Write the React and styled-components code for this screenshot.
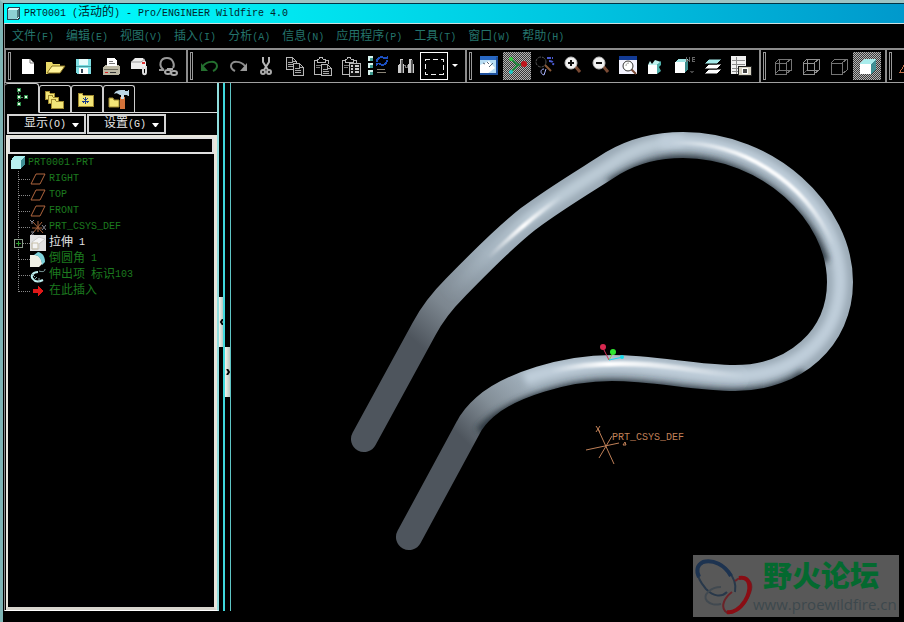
import React, { useState } from 'react';
import styled, { createGlobalStyle, css } from 'styled-components';

const GlobalStyle = createGlobalStyle`
  * { box-sizing: border-box; }
  body {
    margin: 0;
    background: #000;
    font-family: "Liberation Mono", "Noto Sans CJK SC", monospace;
    font-size: 12px;
    line-height: 16px;
    overflow: hidden;
  }
  button, input { font: inherit; color: inherit; }
`;

const Window = styled.div`
  position: relative;
  height: 100vh;
  display: flex;
  flex-direction: column;
  border-left: 3px solid #7fb5b5;
  border-top: 3px solid #9cc4c4;
  padding-left: 1px;
  background: #000;
`;

const TitleBar = styled.header`
  display: flex;
  align-items: center;
  gap: 4px;
  height: 21px;
  padding-left: 3px;
  border-top: 1px solid #034;
  border-bottom: 1px solid #cfe0e0;
  background: linear-gradient(90deg, #00ffff, #00e6f0 32%, #00c4e0 64%, #0099cc);
  color: #02252b;
  white-space: pre;
`;

const Title = styled.h1`
  margin: 0;
  font-size: 12px;
  font-weight: normal;
`;

const Ascii = styled.span`
  font-family: "Liberation Mono", monospace;
  font-size: 10px;
`;

const MenuBar = styled.nav`
  display: flex;
  align-items: center;
  gap: 12px;
  height: 24px;
  padding: 2px 0 0 7px;
  border-left: 1px solid #888;
`;

const MenuItem = styled.button`
  padding: 0;
  border: 0;
  background: none;
  color: #24746c;
  white-space: nowrap;
`;

const ToolBar = styled.div`
  display: flex;
  flex: none;
  height: 35px;
  overflow: hidden;
  border-top: 2px solid #8c8c8c;
  border-bottom: 1px solid #a0a0a0;
`;

const ToolGroup = styled.div`
  display: flex;
  flex: none;
  align-items: center;
  padding: 0 4px 0 2px;
  border-left: 2px solid #8c8c8c;
`;

const Grip = styled.span`
  width: 3px;
  height: 28px;
  margin-right: 3px;
  border: 1px solid #999;
`;

const ToolButton = styled.button`
  width: ${(props) => (props.$narrow ? '13px' : '28px')};
  height: 28px;
  padding: 0;
  border: 0;
  background: none;
  overflow: hidden;

  svg { display: block; }

  ${(props) => props.$outlined && css`
    border: 1px solid #fff;
    svg { margin: -1px; }
  `}
  ${(props) => props.$pressed && css`
    background: repeating-conic-gradient(#b4b4b4 0 25%, #383838 0 50%) 0 0 / 2px 2px;
  `}
`;

const Main = styled.main`
  flex: 1;
  min-height: 0;
  display: grid;
  grid-template-columns: 215px 6px 6px 1fr;
  margin-bottom: 11px;
`;

const Navigator = styled.section`
  display: flex;
  flex-direction: column;
  min-height: 0;
  border-left: 1px solid #888;
  border-bottom: 1px solid #fff;
  border-right: 2px solid #8fdede;
`;

const TabStrip = styled.div`
  display: flex;
  align-items: flex-end;
  height: 30px;

  &::after {
    content: "";
    flex: 1;
    border-bottom: 1px solid #ddd;
  }
`;

const Tab = styled.button`
  width: ${(props) => (props.$active ? '34px' : '32px')};
  height: ${(props) => (props.$active ? '30px' : '28px')};
  padding: 0 1px;
  border: 1px solid #ccc;
  border-bottom-color: ${(props) => (props.$active ? '#000' : '#ddd')};
  border-left-width: ${(props) => (props.$active ? '0' : '1px')};
  border-radius: 3px 3px 0 0;
  background: #000;
  svg { display: block; }
`;

const ActionRow = styled.div`
  display: flex;
  gap: 1px;
  padding: 1px 0 1px 2px;
`;

const DropButton = styled.button`
  display: flex;
  align-items: center;
  justify-content: flex-end;
  gap: 6px;
  width: 79px;
  height: 20px;
  padding: 1px 5px 0;
  border: 2px solid #d4d4d4;
  background: #000;
  color: #e6e6e6;
`;

const TreePanel = styled.div`
  flex: 1;
  min-height: 0;
  display: flex;
  flex-direction: column;
  margin-left: 1px;
  border: 2px solid #e8e6dc;
  border-right-width: 3px;
  border-bottom: 3px solid #d6d4cc;
`;

const FilterInput = styled.input`
  width: 100%;
  height: 17px;
  padding: 0 2px;
  border: 2px solid #e0e0e0;
  border-radius: 0;
  background: #000;
  color: #ddd;
  outline: none;
`;

const Tree = styled.ul`
  margin: 0;
  padding: 1px 0 0 3px;
  list-style: none;
  color: #1c7a1f;
`;

const TreeRow = styled.li`
  display: flex;
  align-items: center;
  height: 16px;
  color: ${(props) => (props.$selected ? '#e4e4e4' : 'inherit')};
  white-space: pre;

  svg { flex: none; margin-right: 3px; }
`;

const Branch = styled.span`
  flex: none;
  display: flex;
  align-items: center;
  width: 19px;
  height: 16px;
  padding-left: 3px;
  background:
    repeating-linear-gradient(90deg, #888 0 1px, #000 1px 2px) 8px 8px / 11px 1px no-repeat,
    repeating-linear-gradient(180deg, #888 0 1px, #000 1px 2px) 7px 0 / 1px ${(props) => (props.$last ? '9px' : '16px')} no-repeat;
`;

const Expander = styled.button`
  width: 9px;
  height: 9px;
  padding: 0;
  border: 1px solid #8a9a8a;
  background:
    linear-gradient(#2fa02f, #2fa02f) center / 5px 1px no-repeat,
    linear-gradient(#2fa02f, #2fa02f) center / 1px 5px no-repeat,
    #000;
`;

const Sash = styled.div`
  display: grid;
  grid-template-rows: 1fr 50px 50px 1fr;
  border-right: ${(props) => (props.$thin ? '1px solid #5fc4c4' : '2px solid #3fd8dc')};
`;

const SashHandle = styled.button`
  grid-row: ${(props) => props.$row};
  display: flex;
  align-items: center;
  justify-content: center;
  padding: 0;
  border: 0;
  background: linear-gradient(90deg, #f4f2ea, #b8c8c2);
`;

const Viewport = styled.section`
  min-width: 0;
  min-height: 0;
  svg { display: block; width: 100%; height: 100%; }
`;

const Watermark = styled.aside`
  position: absolute;
  right: 5px;
  bottom: 5px;
  display: flex;
  width: 206px;
  height: 62px;
  background: #585858;
`;

const MarkText = styled.div`
  display: flex;
  flex-direction: column;
  white-space: nowrap;
`;

const MarkName = styled.strong`
  padding-left: 10px;
  font-family: "Noto Sans CJK SC", sans-serif;
  font-size: 29px;
  font-weight: 900;
  line-height: 38px;
  color: #04692f;
`;

const MarkUrl = styled.a`
  font-family: "Open Sans", sans-serif;
  font-size: 15px;
  line-height: 22px;
  color: #3d484d;
  text-decoration: none;
`;

// Latin runs are set smaller so that two of them fill one Chinese character cell
const Label = ({ text }) =>
  text.split(/([\x20-\x7e]+)/).map((part, i) =>
    i % 2 ? <Ascii key={i}>{part}</Ascii> : part
  );

const Icon = ({ children, size = 28, box = 28, smooth }) => (
  <svg width={size} height={size} viewBox={`0 0 ${box} ${box}`} fill="none"
    shapeRendering={smooth ? 'auto' : 'crispEdges'} aria-hidden="true">
    {children}
  </svg>
);

const Page = ({ x, y, w = 11, h = 13 }) => (
  <g>
    <path d={`M${x} ${y}h${w - 4}l4 4v${h - 4}h-${w}z`} fill="#0a0a0a" stroke="#b8b8b8" />
    <path d={`M${x + w - 4} ${y}v4h4M${x + 2} ${y + 5}h${w - 5}M${x + 2} ${y + 7}h${w - 4}M${x + 2} ${y + 9}h${w - 4}`} stroke="#aaa" />
  </g>
);

const Clipboard = () => (
  <g stroke="#b8b8b8">
    <path d="M9 8H6v14h9M17 8h3v4M9 10V7h2l1-2h2l1 2h2v3z" />
    <path d="M8 13h6M8 15h4" stroke="#777" />
  </g>
);

const Loupe = ({ sign }) => (
  <g>
    <path d="M16 14l5 6" stroke="#7a4a34" strokeWidth="3" />
    <circle cx="12" cy="11" r="6" fill="#f2f2f2" stroke="#bbb" />
    <path d={sign === '+' ? 'M9 11h6M12 8v6' : 'M9 11h6'} stroke="#111" strokeWidth="2" />
  </g>
);

const Cube = ({ x = 7, y = 7 }) => (
  <g transform={`translate(${x} ${y})`}>
    <path d="M0 5h11v10H0z" fill="#fff" />
    <path d="M0 5l4-5h12l-5 5z" fill="#a8ecec" />
    <path d="M11 5l5-5v10l-5 5z" fill="#3f8f94" />
  </g>
);

const Folder = ({ x, y, w = 11, h = 9 }) => (
  <path d={`M${x} ${y}h4l1 2h${w - 5}v${h - 2}h-${w}z`} fill="#f3e678" stroke="#a08a30" />
);

const icons = {
  create: <Icon smooth><path d="M8 7h8l4 4v11H8z" fill="#fff" /><path d="M16 7v4h4" stroke="#777" /></Icon>,
  open: (
    <Icon smooth>
      <path d="M4 10h6l1 2h7v3h-8l-4 7H4z" fill="#e8d868" />
      <path d="M10 14h13l-5 7H5z" fill="#fff49a" stroke="#8a7420" />
    </Icon>
  ),
  save: (
    <Icon>
      <path d="M6 7h15v15H7l-1-1z" fill="#7fdde2" />
      <path d="M9 7h9v6H9z" fill="#e8fbfb" /><path d="M9 16h9v6H9z" fill="#fff" />
      <path d="M11 17h2v4h-2z" fill="#345" /><path d="M6 14h15" stroke="#439ba0" />
    </Icon>
  ),
  print: (
    <Icon>
      <path d="M9 14V6h7l3 3v5z" fill="#fff" /><path d="M11 9h4M11 11h6" stroke="#777" />
      <path d="M5 15l2-2h2v1h10v-1h2l1 2v6l-2 2H5z" fill="#bcb8a4" />
      <path d="M6 17h14v1H6z" fill="#6c6a5c" /><path d="M7 20h3v1H7z" fill="#d22" /><path d="M12 20h6v1h-6z" fill="#333" />
    </Icon>
  ),
  mail: (
    <Icon smooth>
      <path d="M5 10l4-4h8l3 4v7H5z" fill="#eee" /><path d="M5 10h10l4-3" stroke="#999" />
      <path d="M16 10h3v2h-3z" fill="#d33" />
      <path d="M17 15v5c0 3 3 3 3 0v-6" stroke="#ddd" strokeWidth="2" />
    </Icon>
  ),
  link: (
    <Icon smooth>
      <path d="M10 18c-6-4-4-12 3-12 6 0 8 7 6 10M10 18l-3-1M10 18l-5 0" stroke="#999" strokeWidth="2" />
      <ellipse cx="14" cy="20" rx="3" ry="2" stroke="#aaa" strokeWidth="2" />
      <ellipse cx="20" cy="21" rx="3" ry="2" stroke="#aaa" strokeWidth="2" />
      <path d="M13 17h6" stroke="#aaa" strokeWidth="2" />
    </Icon>
  ),
  undo: <Icon smooth><path d="M7 14c4-5 14-6 14 0 0 3-2 4-4 5" stroke="#24702f" strokeWidth="2" /><path d="M5 11v8h7z" fill="#24702f" /></Icon>,
  redo: <Icon smooth><path d="M21 14c-4-5-14-6-14 0 0 3 2 4 4 5" stroke="#8c8c8c" strokeWidth="2" /><path d="M23 11v8h-7z" fill="#999" /></Icon>,
  cut: (
    <Icon smooth>
      <path d="M11 5v5l5 8M17 5v5l-5 8" stroke="#b5b5b5" strokeWidth="2" />
      <circle cx="11" cy="20" r="2" stroke="#aaa" strokeWidth="2" /><circle cx="17" cy="20" r="2" stroke="#aaa" strokeWidth="2" />
    </Icon>
  ),
  copy: <Icon><Page x={6} y={5} w={10} h={12} /><Page x={13} y={11} w={10} h={12} /></Icon>,
  paste: <Icon><Clipboard /><Page x={13} y={12} w={10} h={11} /></Icon>,
  special: (
    <Icon>
      <Clipboard /><path d="M13 11h11v13H13z" fill="#111" stroke="#b8b8b8" />
      <path d="M15 14h2M19 14h4M15 17h2M19 17h4M15 20h2M19 20h4" stroke="#ccc" strokeWidth="2" />
    </Icon>
  ),
  regen: (
    <Icon>
      <path d="M4 4h5v5H4zM4 11h5v5H4zM4 18h5v5H4z" fill="#d8f4f0" />
      <path d="M6 6h3v3H6zM6 13h3v3H6zM6 20h3v3H6z" fill="#3e9a90" />
      <path d="M13 10c0-5 6-6 8-3M23 8c0 5-6 6-8 3" stroke="#1c4fc0" strokeWidth="2" />
      <path d="M19 7h5V4zM17 11h-5v3z" fill="#1c4fc0" />
      <path d="M13 17h8M13 20h9" stroke="#8b8578" />
    </Icon>
  ),
  find: (
    <Icon>
      <path d="M8 7h3v4l1 2v8H6v-8l2-2zM17 7h3v4l2 2v8h-6v-8l1-2z" fill="#ccc" />
      <path d="M10 8v13M20 8v13" stroke="#555" strokeWidth="2" /><path d="M12 13h1v2h2v-2h1" stroke="#777" />
    </Icon>
  ),
  select: <Icon><rect x="5" y="7" width="18" height="15" stroke="#eee" strokeDasharray="5 3" /></Icon>,
  repaint: (
    <Icon smooth>
      <path d="M5 5h17v17H5z" fill="#b8ddf4" /><path d="M5 4h18v4H5z" fill="#2868c4" />
      <path d="M5 13l9-4 6 7-8 6H5z" fill="#fff" /><path d="M8 11l2 1M12 10l2 2M14 15l4-4" stroke="#567" />
      <path d="M5 22h17V5" stroke="#1d4f9c" strokeWidth="2" />
    </Icon>
  ),
  spin: (
    <Icon smooth>
      <path d="M8 7l7 6 6-1M15 13l-7 7" stroke="#1f8a3c" strokeWidth="2" />
      <circle cx="8" cy="7" r="2" fill="#2fd03a" /><circle cx="21" cy="12" r="3" fill="#c0141c" />
      <circle cx="8" cy="20" r="2" fill="#20c8c8" />
    </Icon>
  ),
  orient: (
    <Icon smooth>
      <circle cx="10" cy="10" r="5" stroke="#555" strokeDasharray="3 1" /><path d="M14 13l6 6" stroke="#8a5a38" strokeWidth="2" />
      <path d="M16 6h6M18 9c3 0 5 1 4 4" stroke="#4a5ad0" strokeWidth="2" strokeDasharray="4 1" />
      <path d="M13 17c-4 0-4 5 0 6l2-6" stroke="#aab4ff" />
    </Icon>
  ),
  zoomIn: <Icon smooth><Loupe sign="+" /></Icon>,
  zoomOut: <Icon smooth><Loupe sign="-" /></Icon>,
  fit: (
    <Icon smooth>
      <path d="M4 4h18v18H4z" fill="#f4f4ff" /><path d="M4 4h18v4H4z" fill="#123a94" />
      <path d="M16 17l5 5" stroke="#7a4a34" strokeWidth="2" /><circle cx="13" cy="14" r="5" fill="#fff" stroke="#333" />
      <path d="M11 14c0-2 1-3 3-3" stroke="#999" />
    </Icon>
  ),
  refit: (
    <Icon smooth>
      <path d="M5 13h9v9H5z" fill="#fff" /><path d="M5 13l2-4 2 3 3-4 6 2-4 3z" fill="#bdf2ee" />
      <path d="M14 13l4-4v4l-2 2 2 4-4 3z" fill="#4fb0aa" />
    </Icon>
  ),
  views: (
    <Icon>
      <path d="M4 10h10v11H4z" fill="#fff" /><path d="M4 10l3-3h10l-3 3z" fill="#9fe4e4" /><path d="M14 10l3-3v10l-3 4z" fill="#3c8c8c" />
      <path d="M15 5v5M18 5v5M15 8h3M24 5h-3v4h3M21 7h3" stroke="#666" /><path d="M18 19h5l-2 2z" fill="#444" />
    </Icon>
  ),
  layers: (
    <Icon smooth>
      <path d="M10 17h13l-5 5H5z" fill="#fff" stroke="#000" />
      <path d="M10 12h13l-5 5H5z" fill="#fff" stroke="#000" />
      <path d="M10 7h13l-5 5H5z" fill="#a4eaea" stroke="#000" />
    </Icon>
  ),
  manager: (
    <Icon>
      <path d="M4 4h15v18H4z" fill="#f0f0f0" /><path d="M5 8h13M5 12h13M5 16h13M5 19h13M9 5v17" stroke="#8a8a8a" />
      <path d="M11 14h13v9H11z" fill="#d8d4c4" stroke="#222" /><circle cx="18" cy="19" r="3" fill="#444" stroke="#fff" />
    </Icon>
  ),
  wire: <Icon><path d="M6 11h11v11H6zM10 7h12v11H10zM6 11l4-4M17 11l5-4M6 22l4-4M17 22l5-4" stroke="#757575" /></Icon>,
  hidden: (
    <Icon>
      <path d="M10 18v-7M10 18h7M10 18l-4 4" stroke="#555" />
      <path d="M6 11h11v11H6zM10 7h12v11M6 11l4-4M17 11l5-4M17 22l5-4M10 7v11h12" stroke="#909090" />
    </Icon>
  ),
  noHidden: <Icon><path d="M6 11h11v11H6zM6 11l4-4h12v11l-5 4M17 11l5-4" stroke="#757575" /></Icon>,
  shaded: <Icon><Cube /></Icon>,
  plane: <Icon><path d="M5 20L13 7h8l-8 13z" stroke="#c0704c" /></Icon>,
  tree: (
    <Icon>
      <path d="M12 5v16M12 13h9" stroke="#5a8a68" strokeDasharray="2 1" />
      <path d="M11 4h3v3h-3zM11 11h3v3h-3zM11 18h3v3h-3zM18 11h3v3h-3z" fill="#e8ffe8" stroke="#2c8a48" />
    </Icon>
  ),
  folders: <Icon><Folder x={4} y={5} w={9} h={8} /><Folder x={7} y={9} w={10} h={8} /><Folder x={10} y={13} w={12} h={9} /></Icon>,
  favorites: (
    <Icon>
      <Folder x={5} y={7} w={15} h={13} />
      <path d="M12 11v7M9 15h7M10 12l5 5M15 12l-5 5" stroke="#1a3a8c" />
    </Icon>
  ),
  tools: (
    <Icon smooth>
      <Folder x={4} y={12} w={10} h={9} />
      <path d="M15 11h5v12h-5z" fill="#d4733a" /><path d="M16 8h3v5h-3z" fill="#cfdde4" />
      <path d="M9 8c1-3 4-4 7-4h4v1h3V4h1v6h-1l-1-1h-7c-3-2-4-2-6-1z" fill="#b9d4e4" />
    </Icon>
  ),
};

const toolGroups = [
  [['create', '新建'], ['open', '打开'], ['save', '保存'], ['print', '打印'], ['mail', '邮件'], ['link', '链接']],
  [['undo', '撤消'], ['redo', '重做'], ['cut', '剪切'], ['copy', '复制'], ['paste', '粘贴'], ['special', '选择性粘贴'], ['regen', '再生'], ['find', '查找'], ['select', '选取', 'outlined'], ['more', '更多', 'narrow']],
  [['repaint', '重画'], ['spin', '旋转中心', 'pressed'], ['orient', '定向模式'], ['zoomIn', '放大'], ['zoomOut', '缩小'], ['fit', '重新调整'], ['refit', '重定向'], ['views', '视图列表'], ['layers', '层'], ['manager', '视图管理器']],
  [['wire', '线框'], ['hidden', '隐藏线'], ['noHidden', '无隐藏线'], ['shaded', '着色', 'pressed']],
  [['plane', '基准平面']],
];

const Arrow = () => (
  <svg width="7" height="4" viewBox="0 0 7 4" aria-hidden="true"><path d="M0 0h7L4 4H3z" fill="#fff" /></svg>
);

const menus = ['文件(F)', '编辑(E)', '视图(V)', '插入(I)', '分析(A)', '信息(N)', '应用程序(P)', '工具(T)', '窗口(W)', '帮助(H)'];

const treeIcons = {
  part: <Icon size={14} box={16}><Cube x={0} y={0} /><path d="M0 5h11v10H0z" fill="#b8f0f0" /></Icon>,
  plane: <Icon size={16} box={16} smooth><path d="M1 13L6 3h9l-5 10z" stroke="#b0663e" strokeWidth="1" /></Icon>,
  csys: (
    <Icon size={16} box={16} smooth>
      <path d="M3 3l10 11M2 9h10M12 3L3 14M8 2v11" stroke="#a8623c" /><path d="M0 1l2 2 2-2M2 3v2M12 6l4 5M16 6l-4 5M1 13h3l-3 3h3" stroke="#8a8a94" />
    </Icon>
  ),
  extrude: (
    <Icon size={16} box={16} smooth>
      <path d="M0 0h16v16H0z" fill="#e2e2e2" /><path d="M2 7l7-5 6 2-6 5v5H2z" fill="#f4f4f4" stroke="#ccc" /><path d="M2 8h6v6H2z" stroke="#c8c0a8" />
    </Icon>
  ),
  round: (
    <Icon size={16} box={16} smooth>
      <path d="M0 4h5c4 0 7 4 7 9l-3 3H0z" fill="#f0f0e6" /><path d="M4 4l4-3c5 1 7 5 7 10l-3 3c0-5-3-10-8-10z" fill="#7fd4dc" />
    </Icon>
  ),
  sweep: (
    <Icon size={16} box={16} smooth>
      <path d="M8 5C3 5 0 9 3 12c2 3 6 3 10 1" stroke="#bff0f0" strokeWidth="2" />
      <path d="M15 2c0 3-3 3-6 2M2 7l3 3M4 13l3-3M9 15V11" stroke="#8aa" />
    </Icon>
  ),
  insert: <Icon size={16} box={16}><path d="M3 6h5V3l5 5-5 5v-3H3z" fill="#e01818" /></Icon>,
};

const treeItems = [
  { icon: 'plane', name: 'RIGHT' },
  { icon: 'plane', name: 'TOP' },
  { icon: 'plane', name: 'FRONT' },
  { icon: 'csys', name: 'PRT_CSYS_DEF' },
  { icon: 'extrude', name: '拉伸 1', expandable: true, selected: true },
  { icon: 'round', name: '倒圆角 1' },
  { icon: 'sweep', name: '伸出项 标识103' },
  { icon: 'insert', name: '在此插入' },
];

// centre line of the swept bar
const SWEEP = 'M364 439L424 329C433 312 442 301 455 288C477 266 500 241 528 219C556 198 585 181 613 163C637 149 660 145 683 145C768 145 840 212 840 282C840 338 795 378 735 378C695 378 655 368 612 368C565 368 510 385 485 407C477 414 472 420 468 428L409 537';

const Model = () => (
  <svg viewBox="231 83 673 528" preserveAspectRatio="xMidYMid meet" role="img" aria-label="PRT0001">
    <defs>
      <linearGradient id="steel" gradientUnits="userSpaceOnUse" x1="425" y1="350" x2="500" y2="265">
        <stop offset="0" stopColor="#4e555d" />
        <stop offset="0.4" stopColor="#7c868f" />
        <stop offset="1" stopColor="#9cabb7" />
      </linearGradient>
      <linearGradient id="lower" gradientUnits="userSpaceOnUse" x1="462" y1="438" x2="525" y2="375">
        <stop offset="0" stopColor="#4e555d" />
        <stop offset="0.5" stopColor="#838e97" />
        <stop offset="1" stopColor="#a3b2be" />
      </linearGradient>
      <linearGradient id="fade" gradientUnits="userSpaceOnUse" x1="450" y1="300" x2="530" y2="215">
        <stop offset="0" stopColor="#a3b1bc" stopOpacity="0" />
        <stop offset="1" stopColor="#bccbd6" />
      </linearGradient>
      <linearGradient id="glintLeft" gradientUnits="userSpaceOnUse" x1="488" y1="258" x2="562" y2="196">
        <stop offset="0" stopColor="#fff" stopOpacity="0" />
        <stop offset="0.5" stopColor="#fff" />
        <stop offset="1" stopColor="#fff" stopOpacity="0" />
      </linearGradient>
      <linearGradient id="glintTop" gradientUnits="userSpaceOnUse" x1="670" y1="140" x2="835" y2="245">
        <stop offset="0" stopColor="#fff" stopOpacity="0" />
        <stop offset="0.4" stopColor="#fff" />
        <stop offset="0.7" stopColor="#fff" stopOpacity="0.9" />
        <stop offset="1" stopColor="#fff" stopOpacity="0" />
      </linearGradient>
      <linearGradient id="glintBottom" gradientUnits="userSpaceOnUse" x1="550" y1="0" x2="745" y2="0">
        <stop offset="0" stopColor="#fff" stopOpacity="0" />
        <stop offset="0.3" stopColor="#fff" />
        <stop offset="0.5" stopColor="#fff" stopOpacity="0.7" />
        <stop offset="1" stopColor="#fff" stopOpacity="0" />
      </linearGradient>
      <filter id="soft" filterUnits="userSpaceOnUse" x="300" y="90" width="600" height="500"><feGaussianBlur stdDeviation="3" /></filter>
      <filter id="gleam" filterUnits="userSpaceOnUse" x="300" y="90" width="600" height="500"><feGaussianBlur stdDeviation="1" /></filter>
      <mask id="bar" maskUnits="userSpaceOnUse" x="300" y="90" width="600" height="500">
        <path d={SWEEP} stroke="#fff" strokeWidth="26" strokeLinecap="round" fill="none" />
      </mask>
    </defs>
    <g mask="url(#bar)" fill="none">
      <path d={SWEEP} stroke="url(#steel)" strokeWidth="28" strokeLinecap="round" />
      <path d="M735 378C695 378 655 368 612 368C565 368 510 385 485 407C477 414 472 420 468 428L409 537" stroke="url(#lower)" strokeWidth="28" strokeLinecap="round" />
      <path d="M430 318C433 312 442 301 455 288C477 266 500 241 528 219C556 198 585 181 613 163C637 147 660 141 683 141" stroke="url(#fade)" strokeWidth="12" filter="url(#soft)" />
      <path d="M660 142C768 134 840 212 840 282C840 338 795 376 735 376C695 376 655 364 612 364C585 364 550 370 525 379" stroke="#bfceda" strokeWidth="13" filter="url(#soft)" />
      <path d="M610 184C640 166 660 160 683 160C745 160 808 210 824 262" stroke="#2c363e" strokeWidth="10" filter="url(#soft)" />
      <path d="M480 432C500 408 560 384 612 384C655 384 695 394 735 394C760 394 785 388 805 374" stroke="#2c363e" strokeWidth="10" filter="url(#soft)" />
      <path d="M488 258Q525 222 562 196" stroke="url(#glintLeft)" strokeWidth="4" filter="url(#gleam)" />
      <path d="M670 143C740 140 805 180 833 245" stroke="url(#glintTop)" strokeWidth="4" filter="url(#gleam)" />
      <path d="M550 371Q610 358 680 368T745 374" stroke="url(#glintBottom)" strokeWidth="5" filter="url(#gleam)" />
    </g>
    <path d="M603 348l6 12" stroke="#d0305a" />
    <path d="M609 360l4-7" stroke="#8ad040" />
    <path d="M609 360l14-3" stroke="#18d8e8" />
    <circle cx="603" cy="347" r="3" fill="#d82850" />
    <circle cx="613" cy="352" r="3" fill="#30e830" />
    <circle cx="622" cy="357" r="2" fill="#18d8e8" />
    <g stroke="#c08058">
      <path d="M586 450l33-7M598 429l16 35M599 458l13-22M596 426l4 6M600 426l-4 6M623 445l2-3 1 3z" />
    </g>
    <text x="612" y="440" fill="#c08058" fontFamily="Liberation Mono, monospace" fontSize="10">PRT_CSYS_DEF</text>
  </svg>
);

const App = () => {
  const [filter, setFilter] = useState('');
  const [tab, setTab] = useState('tree');

  return (
    <Window>
      <GlobalStyle />
      <TitleBar>
        <Icon size={13} box={16}>
          <path d="M0 3l3-3h13v13l-3 3H0z" fill="#dff" stroke="#245" strokeWidth="2" />
          <path d="M1 4h11v11H1z" fill="#8cd0d4" /><path d="M12 4l3-3v11l-3 3z" fill="#4a7a80" />
        </Icon>
        <Title><Label text="PRT0001 (活动的) - Pro/ENGINEER Wildfire 4.0" /></Title>
      </TitleBar>

      <MenuBar>
        {menus.map((menu) => <MenuItem key={menu}><Label text={menu} /></MenuItem>)}
      </MenuBar>

      <ToolBar>
        {toolGroups.map((group, i) => (
          <ToolGroup key={i}>
            <Grip />
            {group.map(([name, label, look]) => (
              <ToolButton
                key={name}
                aria-label={label}
                $outlined={look === 'outlined'}
                $pressed={look === 'pressed'}
                $narrow={look === 'narrow'}
              >
                {name === 'more'
                  ? <svg width="13" height="4" viewBox="0 0 13 4"><path d="M4 0h6L7 3z" fill="#fff" /></svg>
                  : icons[name]}
              </ToolButton>
            ))}
          </ToolGroup>
        ))}
      </ToolBar>

      <Main>
        <Navigator>
          <TabStrip>
            {[['tree', '模型树'], ['folders', '文件夹'], ['favorites', '收藏夹'], ['tools', '连接']].map(([name, label]) => (
              <Tab key={name} aria-label={label} $active={tab === name} onClick={() => setTab(name)}>{icons[name]}</Tab>
            ))}
          </TabStrip>
          <ActionRow>
            <DropButton><span><Label text="显示(O)" /></span><Arrow /></DropButton>
            <DropButton><span><Label text="设置(G)" /></span><Arrow /></DropButton>
          </ActionRow>
          <TreePanel>
            <FilterInput aria-label="过滤" value={filter} onChange={(e) => setFilter(e.target.value)} />
            <Tree>
              <TreeRow>{treeIcons.part}<Label text="PRT0001.PRT" /></TreeRow>
              {treeItems.map((item, i) => (
                <TreeRow key={item.name} $selected={item.selected}>
                  <Branch $last={i === treeItems.length - 1}>
                    {item.expandable && <Expander aria-label="展开" />}
                  </Branch>
                  {treeIcons[item.icon]}
                  <Label text={item.name} />
                </TreeRow>
              ))}
            </Tree>
          </TreePanel>
        </Navigator>
        <Sash>
          <SashHandle $row={2} aria-label="收起">
            <svg width="4" height="6" viewBox="0 0 4 6" fill="none"><path d="M4 0L2 3l2 3" stroke="#000" strokeWidth="2" /></svg>
          </SashHandle>
        </Sash>
        <Sash $thin>
          <SashHandle $row={3} aria-label="展开">
            <svg width="4" height="6" viewBox="0 0 4 6" fill="none"><path d="M1 0l2 3-2 3" stroke="#000" strokeWidth="2" /></svg>
          </SashHandle>
        </Sash>
        <Viewport><Model /></Viewport>
      </Main>

      <Watermark>
        <svg width="60" height="62" viewBox="0 0 60 62" fill="none" aria-hidden="true">
          <path d="M42 37C45 22 30 6 14 6 2 8 1 20 13 34 20 41 28 43 34 37" stroke="#28384a" strokeWidth="2" />
          <path d="M38 21C32 10 20 4 10 7 4 10 3 16 6 22" stroke="#1d3350" strokeWidth="4" />
          <path d="M28 32C18 32 9 40 14 46c4 4 8 4 14 3" stroke="#414950" strokeWidth="2" />
          <path d="M42 26C50 18 62 25 57 38 52 52 38 62 32 56 28 51 31 43 39 37" stroke="#6b2328" strokeWidth="2" />
          <path d="M46 23c12-2 13 11 6 23-5 8-12 12-18 11" stroke="#8a0d14" strokeWidth="4" />
        </svg>
        <MarkText>
          <MarkName>野火论坛</MarkName>
          <MarkUrl href="#">www.proewildfire.cn</MarkUrl>
        </MarkText>
      </Watermark>
    </Window>
  );
};

export default App;
